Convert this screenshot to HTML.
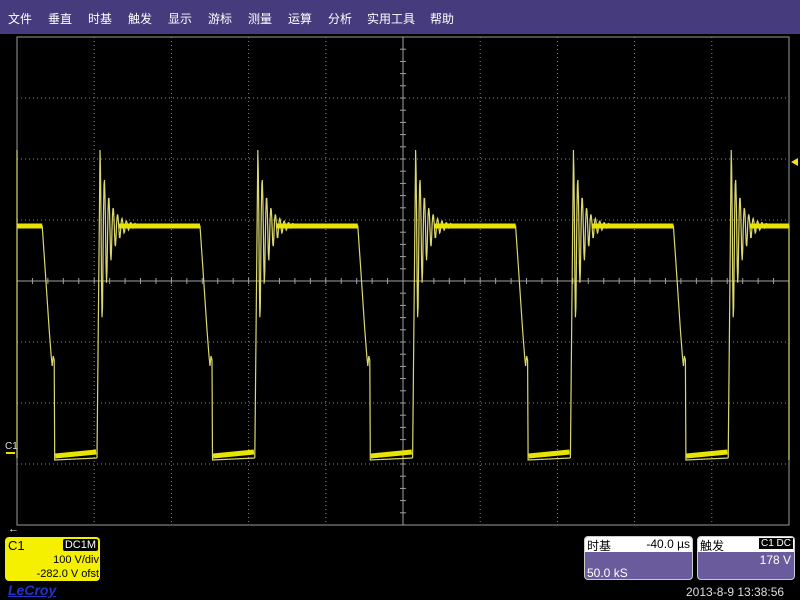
<!DOCTYPE html>
<html><head><meta charset="utf-8">
<style>
html,body{margin:0;padding:0;width:800px;height:600px;background:#000;overflow:hidden;font-family:"Liberation Sans","Noto Sans CJK SC",sans-serif}
#menu{position:absolute;left:0;top:0;width:800px;height:34px;background:#463b7c;color:#fff;font-size:12px}
#menu span{position:absolute;top:10px}
.box{position:absolute;border-radius:4px}
</style></head><body>
<div id="menu">
<span style="left:8px">文件</span><span style="left:48px">垂直</span><span style="left:88px">时基</span><span style="left:128px">触发</span><span style="left:168px">显示</span><span style="left:208px">游标</span><span style="left:248px">测量</span><span style="left:288px">运算</span><span style="left:328px">分析</span><span style="left:367px">实用工具</span><span style="left:430px">帮助</span>
</div>
<svg id="s" width="800" height="600" style="position:absolute;left:0;top:0"></svg>
<div class="box" style="left:5px;top:537px;width:95px;height:44px;background:#f4f000;color:#000;font-size:11px">
<div style="position:absolute;left:3px;top:1px;font-size:13px">C1</div>
<div style="position:absolute;right:2px;top:2px;background:#000;color:#fff;padding:0 2px;border-radius:2px;font-size:11px">DC1M</div>
<div style="position:absolute;right:1px;top:17px;font-size:11px">100 V/div</div>
<div style="position:absolute;right:1px;top:31px;font-size:11px">-282.0 V ofst</div>
</div>
<div style="position:absolute;left:8px;top:582px;color:#2233cc;font-size:14px;font-weight:bold;font-style:italic;text-decoration:underline">LeCroy</div>
<div class="box" style="left:584px;top:536px;width:109px;height:44px;background:#6a5c9c;border:1px solid #ccc;box-sizing:border-box">
<div style="background:#fff;height:15px;border-radius:3px 3px 0 0;font-size:12px;color:#000;padding-left:2px">时基<span style="float:right;padding-right:2px">-40.0 µs</span></div>
<div style="color:#fff;font-size:12px;position:absolute;left:2px;top:29px">50.0 kS</div>
</div>
<div class="box" style="left:697px;top:536px;width:98px;height:44px;background:#6a5c9c;border:1px solid #ccc;box-sizing:border-box">
<div style="background:#fff;height:15px;border-radius:3px 3px 0 0;font-size:12px;color:#000;padding-left:2px">触发<span style="float:right;background:#000;color:#fff;font-size:10px;padding:0 2px;margin:1px">C1 DC</span></div>
<div style="color:#fff;font-size:12px;position:absolute;right:3px;top:16px">178 V</div>
</div>
<div style="position:absolute;left:686px;top:585px;color:#ddd;font-size:12px">2013-8-9 13:38:56</div>
<script>
var s=document.getElementById('s'),h='';
var L=17,R=789,T=37,B=525,cx=403,cy=281,dx=77.2,dy=61;
h+='<rect x="'+L+'" y="'+T+'" width="'+(R-L)+'" height="'+(B-T)+'" fill="none" stroke="#9a9a9a" stroke-width="1"/>';
for(var i=1;i<10;i++){var x=L+i*dx;if(i==5)continue;h+='<line x1="'+x+'" y1="'+T+'" x2="'+x+'" y2="'+B+'" stroke="#8a8a8a" stroke-dasharray="1,3"/>';}
for(var j=1;j<8;j++){var y=T+j*dy;if(j==4)continue;h+='<line x1="'+L+'" y1="'+y+'" x2="'+R+'" y2="'+y+'" stroke="#8a8a8a" stroke-dasharray="1,3"/>';}
h+='<line x1="'+cx+'" y1="'+T+'" x2="'+cx+'" y2="'+B+'" stroke="#a0a0a0"/>';
h+='<line x1="'+L+'" y1="'+cy+'" x2="'+R+'" y2="'+cy+'" stroke="#a0a0a0"/>';
for(var x=L;x<R;x+=dx/5)h+='<line x1="'+x+'" y1="'+(cy-3)+'" x2="'+x+'" y2="'+(cy+3)+'" stroke="#a0a0a0"/>';
for(var y=T;y<B;y+=dy/5)h+='<line x1="'+(cx-3)+'" y1="'+y+'" x2="'+(cx+3)+'" y2="'+y+'" stroke="#a0a0a0"/>';
var p='',thick='';
for(var k=-1;k<5;k++){
 var r=97+k*157.8;
 var seg=[];
 seg.push([r,458]);seg.push([r+3,153]);
 for(var t=3;t<=40;t+=0.5){var e=Math.exp(-(t-3)/9);var c=Math.cos(2*Math.PI*(t-3)/4.4);var d=c>0?-75*e*c:-120*e*c;seg.push([r+t,225+d]);}
 seg.push([r+103,226]);seg.push([r+106,270]);seg.push([r+110,330]);seg.push([r+112,356]);seg.push([r+113,366]);seg.push([r+114,356]);seg.push([r+115,360]);seg.push([r+115.5,460]);seg.push([r+157.8,458]);
 var d='';
 for(var q=0;q<seg.length;q++){var X=Math.max(L,Math.min(R,seg[q][0]));d+=(q?'L':'M')+X.toFixed(1)+','+seg[q][1].toFixed(1);}
 p+=d;
 var a=Math.max(L,r+22),b=Math.min(R,r+103);if(b>a)thick+='<line x1="'+a+'" y1="226" x2="'+b+'" y2="226" stroke="#e8e400" stroke-width="5"/>';
 a=Math.max(L,r+116);b=Math.min(R,r+157);if(b>a)thick+='<line x1="'+a+'" y1="456" x2="'+b+'" y2="452" stroke="#e8e400" stroke-width="5"/>';
}
h+='<path d="'+p+'" fill="none" stroke="#dcd870" stroke-width="1.2"/>'+thick;
h+='<polygon points="791,162 798,158 798,166" fill="#f0e020"/>';
h+='<text x="5" y="449" fill="#ddd" font-size="10" font-family="Liberation Sans">C1</text><line x1="6" y1="453" x2="15" y2="453" stroke="#f0e000" stroke-width="2"/>';
h+='<text x="8" y="532" fill="#fff" font-size="11">←</text>';
s.innerHTML=h;
</script>
</body></html>
